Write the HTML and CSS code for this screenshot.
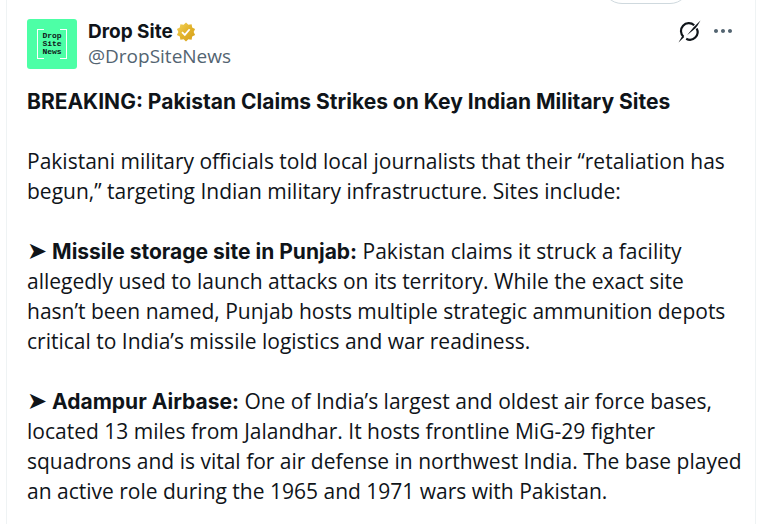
FILE: index.html
```html
<!DOCTYPE html>
<html lang="en">
<head>
<meta charset="utf-8">
<meta name="viewport" content="width=device-width, initial-scale=1">
<title>Drop Site on X</title>
<link rel="stylesheet" href="styles.css">
</head>
<body>
<main class="column">
  <span class="pill"></span>
  <article class="post">
    <header class="post-header">
      <a class="avatar" href="#"><span class="avatar-mark">Drop<br>Site<br>News</span></a>
      <div class="author">
        <div class="name-row">
          <a class="name" href="#">Drop Site</a>
          <svg class="badge" viewBox="0 0 22 22" aria-hidden="true">
            <defs>
              <linearGradient id="gold" x1="0" y1="0" x2="1" y2="1">
                <stop offset="0" stop-color="#f4d55c"/>
                <stop offset="0.5" stop-color="#e2b32b"/>
                <stop offset="1" stop-color="#d59f1b"/>
              </linearGradient>
            </defs>
            <path fill="url(#gold)" d="M13.596 3.011L11 .5 8.404 3.011l-3.576-.506-.624 3.558L1.010 7.750 2.600 11l-1.590 3.245 3.199 1.692.624 3.558 3.576-.506L11 21.500l2.596-2.511 3.576.506.624-3.558 3.199-1.692L19.400 11l1.590-3.246-3.199-1.692-.624-3.558-3.576.506z"/>
            <path fill="none" stroke="#fff" stroke-width="2" d="M6.600 11.200l3.100 3 5.300-6.200"/>
          </svg>
        </div>
        <a class="handle" href="#">@DropSiteNews</a>
      </div>
      <div class="actions">
        <button class="icon-button" type="button" aria-label="Explain this post">
          <svg class="grok" viewBox="0 0 24 24" aria-hidden="true">
            <path fill="none" stroke="#0f1419" stroke-width="2.200" d="M6.500 17.800A7.700 7.700 0 0 1 17.200 6.200M19.700 9.400A7.700 7.700 0 0 1 9.200 19.700"/>
            <path fill="#0f1419" d="M23.500 1.500 20.600 6.500 18.500 9.200 10 16.200 16.800 8zM1.500 23.500 5.400 16.700 7.200 18z"/>
          </svg>
        </button>
        <button class="icon-button" type="button" aria-label="More">
          <svg class="more" viewBox="0 0 24 24" aria-hidden="true">
            <path fill="#536471" d="M3 12c0-1.100.9-2 2-2s2 .9 2 2-.9 2-2 2-2-.9-2-2zm9 2c1.100 0 2-.9 2-2s-.9-2-2-2-2 .9-2 2 .9 2 2 2zm7 0c1.100 0 2-.9 2-2s-.9-2-2-2-2 .9-2 2 .9 2 2 2z"/>
          </svg>
        </button>
      </div>
    </header>
    <div class="post-text">
      <p><strong>BREAKING: Pakistan Claims Strikes on Key Indian Military Sites</strong></p>
      <p>Pakistani military officials told local journalists that their “retaliation has<br>begun,” targeting Indian military infrastructure. Sites include:</p>
      <p><strong><span class="arrow">➤</span> Missile storage site in Punjab:</strong> Pakistan claims it struck a facility<br>allegedly used to launch attacks on its territory. While the exact site<br>hasn’t been named, Punjab hosts multiple strategic ammunition depots<br>critical to India’s missile logistics and war readiness.</p>
      <p><strong><span class="arrow">➤</span> Adampur Airbase:</strong> One of India’s largest and oldest air force bases,<br>located 13 miles from Jalandhar. It hosts frontline MiG-29 fighter<br>squadrons and is vital for air defense in northwest India. The base played<br>an active role during the 1965 and 1971 wars with Pakistan.</p>
    </div>
  </article>
</main>
</body>
</html>
```
FILE: styles.css
```css
* {
  box-sizing: border-box;
}

body {
  margin: 0;
  background: #fff;
  color: #0f1419;
  font-family: "Open Sans", "Liberation Sans", sans-serif;
  font-size: 21px;
  line-height: 30px;
}

.column {
  position: relative;
  min-height: 100vh;
  margin: 0 5px 0 6px;
  padding: 19px 20px 0;
  border: solid #eff3f4;
  border-width: 0 1px;
  white-space: nowrap;
  overflow: hidden;
}

.pill {
  position: absolute;
  top: -37px;
  right: 65px;
  width: 88px;
  height: 41px;
  border: 1px solid #cfd9de;
  border-radius: 20px;
}

.post-header {
  display: flex;
  gap: 11px;
  margin-bottom: 17px;
}

a {
  color: inherit;
  text-decoration: none;
}

.avatar {
  display: grid;
  place-items: center;
  width: 50px;
  height: 50px;
  border-radius: 3px;
  background: #4dffa6;
}

.avatar-mark {
  position: relative;
  padding: 3px 5px;
  font: bold 8px/8px "Liberation Mono", monospace;
}

.avatar-mark::before,
.avatar-mark::after {
  content: "";
  position: absolute;
  top: 0;
  bottom: 0;
  width: 6px;
  border: 1px solid #fff;
}

.avatar-mark::before {
  left: 0;
  border-right: 0;
}

.avatar-mark::after {
  right: 0;
  border-left: 0;
}

.author {
  flex: 1;
  font-size: 19px;
  line-height: 25px;
}

.name-row {
  display: flex;
  align-items: center;
  gap: 3px;
}

.name,
strong {
  font-family: Inter, "Liberation Sans", sans-serif;
  font-weight: 700;
}

strong {
  line-height: 20px;
}

.badge {
  width: 20px;
  height: 20px;
}

.handle {
  color: #536471;
}

.actions {
  display: flex;
  align-items: flex-start;
  gap: 10px;
}

.icon-button {
  display: flex;
  padding: 0;
  border: 0;
  background: none;
}

.grok,
.more {
  width: 24px;
  height: 24px;
}

.post-text p {
  margin: 0 0 30px;
}

.post-text p:last-child {
  margin-bottom: 0;
}

.arrow {
  font-family: "DejaVu Sans", sans-serif;
  font-size: 24px;
  font-weight: 400;
}
```
